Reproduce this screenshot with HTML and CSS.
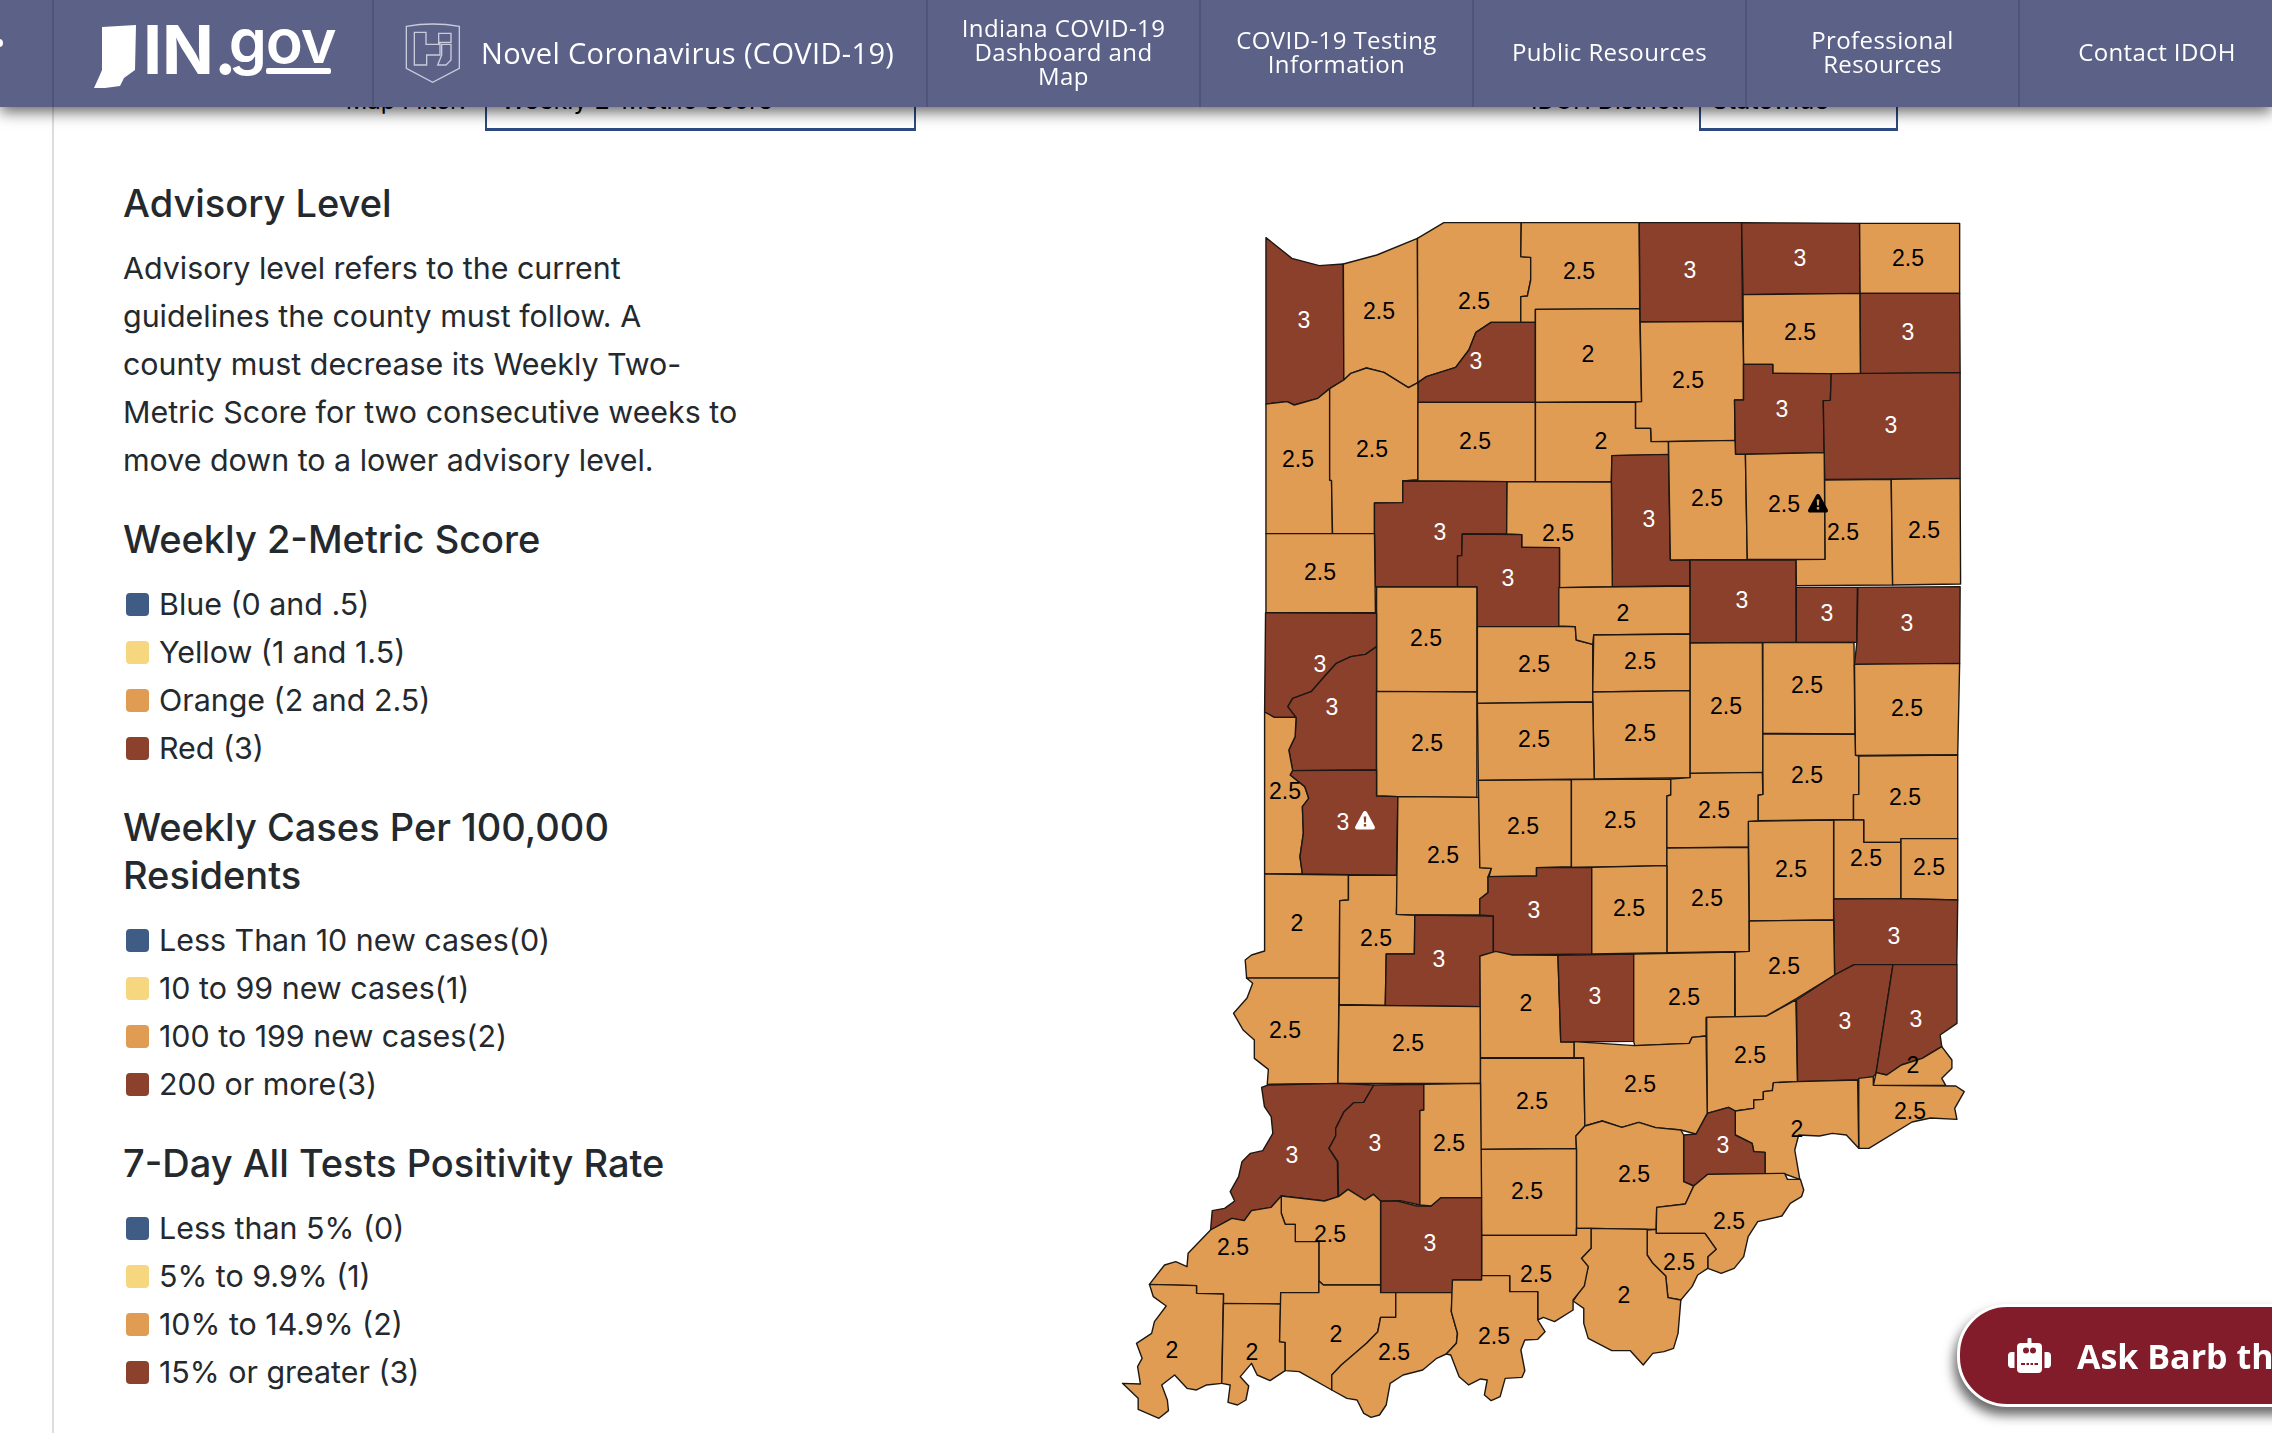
FILE: index.html
```html
<!DOCTYPE html>
<html lang="en">
<head>
<meta charset="utf-8">
<title>Indiana COVID-19 Advisory Map</title>
<link rel="stylesheet" href="styles.css">
</head>
<body>
<header class="nav">
  <div class="cell cell-menu"><span class="menu-dot"></span></div>
  <a class="cell cell-logo">
    <svg class="logo" viewBox="0 0 260 80" width="260" height="80">
      <polygon points="17,12 51,10 50,55 39,63 35,71 20,73 9,73 14,62 17,55 17,33"/>
      <text class="logo-in" x="58" y="59">IN.<tspan class="logo-gov" dx="-8" dy="-11">gov</tspan></text>
      <rect x="181" y="53" width="65" height="6" rx="2"/>
    </svg>
  </a>
  <a class="cell cell-title">
    <svg class="shield" viewBox="0 0 240 240" width="80" height="80">
      <path d="M31 34 Q110 20 190 34 V160 L110 202 L31 160 Z"/>
      <path d="M55 52 H90 V88 H128 V55 H165 V82 H132 V120 H92 V150 H55 Z"/>
      <path d="M137 88 H165 V135 L150 150 H125 L137 120 Z"/>
    </svg>
    <span class="title-text">Novel Coronavirus (COVID-19)</span>
  </a>
  <a class="cell cell-link">Indiana COVID-19 Dashboard and Map</a>
  <a class="cell cell-link">COVID-19 Testing Information</a>
  <a class="cell cell-link">Public Resources</a>
  <a class="cell cell-link">Professional Resources</a>
  <a class="cell cell-link">Contact IDOH</a>
</header>

<main class="page">
  <div class="filters">
    <span class="filter-label label-map">Map Filter:</span>
    <div class="select select-map">Weekly 2-Metric Score</div>
    <span class="filter-label label-district">IDOH District:</span>
    <div class="select select-district">Statewide</div>
  </div>

  <div class="content">
    <aside class="legend">
      <section class="block">
        <h2>Advisory Level</h2>
        <p>Advisory level refers to the current guidelines the county must follow. A county must decrease its Weekly Two-Metric Score for two consecutive weeks to move down to a lower advisory level.</p>
      </section>
      <section class="block">
        <h2>Weekly 2-Metric Score</h2>
        <ul>
          <li><i class="sw blue"></i>Blue (0 and .5)</li>
          <li><i class="sw yellow"></i>Yellow (1 and 1.5)</li>
          <li><i class="sw orange"></i>Orange (2 and 2.5)</li>
          <li><i class="sw red"></i>Red (3)</li>
        </ul>
      </section>
      <section class="block">
        <h2>Weekly Cases Per 100,000 Residents</h2>
        <ul>
          <li><i class="sw blue"></i>Less Than 10 new cases(0)</li>
          <li><i class="sw yellow"></i>10 to 99 new cases(1)</li>
          <li><i class="sw orange"></i>100 to 199 new cases(2)</li>
          <li><i class="sw red"></i>200 or more(3)</li>
        </ul>
      </section>
      <section class="block">
        <h2>7-Day All Tests Positivity Rate</h2>
        <ul>
          <li><i class="sw blue"></i>Less than 5% (0)</li>
          <li><i class="sw yellow"></i>5% to 9.9% (1)</li>
          <li><i class="sw orange"></i>10% to 14.9% (2)</li>
          <li><i class="sw red"></i>15% or greater (3)</li>
        </ul>
      </section>
    </aside>

    <svg class="map" viewBox="1100 179 880 1254" width="880" height="1254">
      <defs>
        <path id="warn" fill-rule="evenodd" d="M10 0 C11 0 11.6 .6 12 1.3 L19.7 15.6 C20.4 17 19.6 18.5 18 18.5 H2 C.4 18.5 -.4 17 .3 15.6 L8 1.3 C8.4 .6 9 0 10 0 Z M8.7 5.5 L9.1 11.5 H10.9 L11.3 5.5 Z M8.8 13 V15.5 H11.2 V13 Z"/>
      </defs>
      <g transform="translate(1240 210) scale(.4719 .33333)">
        <polygon class="r" points="55,83 110,145 168,167 219,162 220,510 190,536 165,565 115,585 100,575 55,582"/>
        <polygon class="o" points="219,162 290,135 376,85 377,518 357,533 305,487 268,474 235,490 220,510"/>
        <polygon class="o" points="376,85 432,38 596,38 595,140 616,142 616,210 609,258 595,260 595,337 532,337 500,367 485,420 457,472 395,500 377,518"/>
        <polygon class="o" points="596,38 846,38 847,296 626,298 626,337 595,337 595,260 609,258 616,210 616,142 595,140"/>
        <polygon class="r" points="532,337 626,337 626,577 376,577 377,518 395,500 457,472 485,420 500,367"/>
        <polygon class="o" points="626,298 847,296 851,575 626,577"/>
        <polygon class="r" points="846,38 1063,38 1065,334 848,336"/>
        <polygon class="r" points="1063,38 1313,40 1314,250 1066,254"/>
        <polygon class="o" points="1313,40 1525,40 1525,250 1314,250"/>
        <polygon class="o" points="1066,254 1314,250 1315,492 1129,490 1129,463 1067,463"/>
        <polygon class="r" points="1314,250 1525,250 1526,488 1315,492"/>
        <polygon class="o" points="848,336 1065,334 1067,463 1067,570 1048,570 1049,691 871,695 870,655 838,655 838,576 851,575"/>
        <polygon class="r" points="1067,463 1129,463 1129,490 1253,491 1251,571 1236,572 1238,728 1050,733 1048,570 1067,570"/>
        <polygon class="r" points="1253,491 1526,488 1526,805 1239,808 1236,572 1251,571"/>
        <polygon class="o" points="55,582 100,575 115,585 165,565 190,536 190,810 194,812 196,971 55,971"/>
        <polygon class="o" points="190,536 220,510 235,490 268,474 305,487 357,533 377,518 377,810 345,813 345,878 285,879 285,971 196,971 194,812 190,810"/>
        <polygon class="o" points="377,577 626,577 626,816 566,815 345,813 377,810"/>
        <polygon class="o" points="626,577 838,576 838,655 870,655 871,695 908,695 908,733 788,737 787,816 626,816"/>
        <polygon class="r" points="788,737 908,733 912,1050 953,1050 953,1127 789,1130 787,816"/>
        <polygon class="o" points="908,695 1049,691 1050,733 1071,733 1075,1048 912,1050"/>
        <polygon class="o" points="1071,733 1238,728 1240,1048 1075,1048"/>
        <polygon class="o" points="1239,810 1380,808 1383,1125 1179,1127 1178,1049 1240,1048"/>
        <polygon class="o" points="1380,808 1526,805 1527,1122 1383,1125"/>
        <polygon class="r" points="345,813 566,815 565,972 471,972 470,1037 461,1038 461,1131 287,1131 285,971 285,879 345,878"/>
        <polygon class="o" points="566,815 787,816 789,1130 677,1133 677,1013 597,1012 597,974 565,972"/>
        <polygon class="r" points="471,972 597,974 597,1012 677,1013 677,1133 677,1250 503,1250 502,1131 461,1131 461,1038 470,1037"/>
        <polygon class="o" points="55,971 285,971 287,1208 55,1208"/>
      </g>
      <g transform="translate(1220 600) scale(.4847 .33333)">
        <polygon class="o" points="323,-39 530,-39 530,276 323,274"/>
        <polygon class="r" points="94,38 323,40 323,140 300,163 270,170 240,190 215,230 188,275 150,295 140,320 157,352 112,352 92,336"/>
        <polygon class="r" points="323,140 323,510 150,512 142,450 155,410 157,352 140,320 150,295 188,275 215,230 240,190 270,170 300,163"/>
        <polygon class="o" points="323,274 530,276 530,592 367,590 323,588"/>
        <polygon class="o" points="92,336 112,352 157,352 155,410 142,450 150,512 145,525 175,560 183,595 170,620 172,700 165,770 170,822 92,822"/>
        <polygon class="r" points="150,512 323,510 323,588 367,590 364,826 170,822 165,770 172,700 170,620 183,595 175,560 145,525"/>
        <polygon class="o" points="92,822 265,825 265,900 247,902 246,1135 55,1135 52,1080 65,1065 92,1053"/>
        <polygon class="o" points="265,825 367,826 364,943 402,945 401,1062 343,1062 341,1216 246,1213 247,902 265,900"/>
        <polygon class="o" points="367,590 536,592 536,803 560,805 553,830 553,878 536,897 536,945 402,945 364,943"/>
        <polygon class="r" points="402,945 564,948 564,1057 537,1068 537,1220 341,1216 343,1062 401,1062"/>
        <polygon class="o" points="531,80 733,80 735,120 769,133 769,306 531,310"/>
        <polygon class="o" points="699,-37 970,-42 970,102 771,105 769,133 735,120 733,80 699,78"/>
        <polygon class="o" points="771,105 970,102 970,272 769,276"/>
        <polygon class="o" points="769,276 970,272 970,533 772,537"/>
        <polygon class="o" points="531,310 769,306 772,537 533,541"/>
        <polygon class="r" points="970,-120 1188,-120 1189,127 970,129"/>
        <polygon class="r" points="1189,-38 1315,-38 1314,127 1189,127"/>
        <polygon class="r" points="1316,-38 1527,-40 1526,190 1309,193 1314,127"/>
        <polygon class="o" points="970,129 1119,128 1120,400 1120,517 970,520"/>
        <polygon class="o" points="1120,128 1308,127 1310,402 1120,400"/>
        <polygon class="o" points="1309,193 1526,190 1522,464 1311,466"/>
        <polygon class="o" points="1120,402 1310,403 1311,466 1318,468 1318,583 1307,584 1307,658 1110,662 1110,585 1120,583"/>
        <polygon class="o" points="1318,468 1522,465 1522,716 1405,716 1405,727 1328,727 1328,660 1307,659 1307,584 1318,583"/>
        <polygon class="o" points="1266,660 1328,660 1328,727 1405,727 1405,896 1266,897"/>
        <polygon class="o" points="1405,716 1522,716 1522,900 1405,896"/>
        <polygon class="o" points="1090,664 1266,660 1266,960 1092,963"/>
        <polygon class="r" points="1266,897 1405,896 1522,900 1520,1094 1308,1094 1268,1125"/>
        <polygon class="o" points="533,541 725,539 725,800 653,803 653,828 555,830 560,805 536,803"/>
        <polygon class="o" points="725,539 930,537 930,585 922,588 922,797 725,802"/>
        <polygon class="o" points="922,588 930,585 930,537 970,533 970,520 1119,517 1120,583 1110,585 1110,662 1090,664 1090,741 922,744"/>
        <polygon class="o" points="922,744 1090,742 1092,1054 922,1058"/>
        <polygon class="r" points="653,803 767,802 767,1062 595,1065 564,1057 564,948 536,945 536,897 553,878 553,830 653,828"/>
        <polygon class="o" points="767,802 922,797 922,1058 767,1062"/>
        <polygon class="o" points="1092,963 1266,960 1268,1125 1190,1195 1125,1250 1063,1250 1062,1056 1092,1054"/>
      </g>
      <g transform="translate(1100 1000) scale(.5612 .33333)">
        <polygon class="o" points="261,-66 426,-66 424,250 298,253 300,208 275,175 275,120 255,90 238,40 262,-6 272,-50"/>
        <polygon class="o" points="426,15 678,20 678,250 424,250"/>
        <polygon class="o" points="677,-132 705,-146 735,-135 816,-134 821,125 845,126 845,173 678,173"/>
        <polygon class="r" points="816,-134 951,-138 951,124 821,126"/>
        <polygon class="o" points="951,-138 1131,-144 1131,50 1080,52 1080,108 1055,112 1050,130 953,137 951,124"/>
        <polygon class="o" points="1081,52 1188,48 1240,0 1243,245 1200,248 1198,272 1182,275 1182,298 1165,300 1165,325 1132,333 1120,322 1082,340"/>
        <polygon class="r" points="1309,-75 1344,-106 1413,-106 1383,220 1378,230 1350,240 1243,245 1241,0"/>
        <polygon class="r" points="1413,-106 1527,-106 1527,70 1497,105 1500,140 1465,175 1428,195 1402,225 1383,218"/>
        <polygon class="o" points="1383,218 1402,225 1428,195 1465,175 1500,140 1518,180 1518,205 1500,235 1507,256 1378,256"/>
        <polygon class="o" points="1378,256 1525,258 1540,275 1523,325 1527,358 1480,354 1447,366 1370,445 1352,445 1352,235 1378,230"/>
        <polygon class="o" points="1243,245 1350,240 1352,445 1330,405 1305,400 1282,408 1245,405 1238,450 1247,538 1220,522 1185,520 1185,457 1165,455 1162,430 1132,405 1132,333 1165,325 1165,300 1182,298 1182,275 1198,272 1200,248"/>
        <polygon class="r" points="1132,333 1120,322 1082,340 1062,402 1040,405 1040,545 1058,558 1083,523 1185,520 1185,457 1165,455 1162,430 1132,405"/>
        <polygon class="o" points="678,175 862,175 864,378 848,408 849,446 678,448"/>
        <polygon class="o" points="845,125 953,137 1050,130 1055,112 1080,108 1082,340 1062,402 1035,390 990,383 960,367 930,382 895,363 864,378 862,173 845,173"/>
        <polygon class="o" points="864,378 895,363 930,382 960,367 990,383 1035,390 1040,405 1040,545 1058,558 1043,612 992,622 991,688 875,685 849,685 849,446 848,408"/>
        <polygon class="o" points="678,448 849,446 849,706 680,706"/>
        <polygon class="o" points="1058,558 1083,523 1220,520 1225,538 1248,538 1254,570 1250,590 1230,610 1215,648 1172,665 1155,710 1147,770 1130,805 1107,820 1083,805 1083,770 1098,748 1078,700 991,700 992,622 1043,612"/>
        <polygon class="o" points="975,690 991,688 991,700 1078,700 1098,748 1083,770 1083,805 1065,825 1055,860 1035,900 1012,893 1008,828 985,790 975,765"/>
        <polygon class="o" points="875,685 975,688 975,765 985,790 1008,828 1012,893 1035,900 1030,1000 1022,1045 1005,1055 985,1060 968,1095 945,1052 912,1052 870,1015 862,970 862,925 843,903 860,860 870,800 858,775 875,745"/>
        <polygon class="o" points="680,706 849,706 849,685 875,685 875,745 858,775 870,800 863,858 843,900 843,930 810,965 790,952 780,960 780,875 730,875 730,827 680,827"/>
        <polygon class="r" points="500,603 530,603 565,618 590,618 607,593 680,593 680,840 630,840 628,878 500,878"/>
        <polygon class="r" points="288,262 300,255 424,250 488,255 470,307 452,308 435,335 420,385 420,408 408,445 423,485 424,590 400,603 323,588 305,622 270,632 257,662 235,655 197,690 200,632 222,625 240,603 232,575 247,530 253,485 268,460 290,452 308,400 305,350 293,320"/>
        <polygon class="r" points="488,255 577,253 577,330 570,332 570,615 535,602 500,603 487,583 472,600 442,568 425,590 424,485 408,445 420,408 420,385 435,335 452,308 470,307"/>
        <polygon class="o" points="577,253 678,250 680,593 607,593 590,618 570,615 570,332 577,330"/>
        <polygon class="o" points="323,588 400,603 425,590 442,568 472,600 487,583 500,603 500,855 398,855 390,843 390,725 348,725 348,673 330,673 323,640"/>
        <polygon class="o" points="197,690 235,655 257,662 270,632 305,622 323,588 323,640 330,673 348,673 348,725 390,725 390,878 322,878 322,912 220,910 220,882 172,880 172,857 88,853 115,795 135,785 155,800 157,760"/>
        <polygon class="o" points="88,853 172,857 172,880 220,882 217,1150 190,1155 172,1170 155,1165 133,1125 110,1155 120,1200 122,1232 105,1255 68,1228 68,1195 40,1150 72,1152 67,1100 75,1075 65,1030 92,1000 97,965 118,918 95,890"/>
        <polygon class="o" points="220,910 322,912 320,1025 330,1027 330,1112 303,1142 280,1125 270,1090 250,1130 265,1158 260,1200 245,1215 228,1207 232,1155 217,1150"/>
        <polygon class="o" points="322,878 390,878 390,843 398,855 500,855 500,878 527,878 527,952 500,952 495,995 475,1030 430,1095 413,1125 413,1170 355,1115 330,1112 330,1027 320,1025"/>
        <polygon class="o" points="527,878 628,878 626,935 637,1000 635,1030 617,1062 600,1075 575,1110 540,1125 517,1150 510,1215 498,1245 483,1252 470,1240 458,1200 440,1195 413,1170 413,1125 430,1095 475,1030 495,995 500,952 527,952"/>
        <polygon class="o" points="628,840 680,840 680,827 730,827 730,875 780,875 780,960 793,995 780,1018 757,1020 750,1050 757,1112 752,1132 722,1135 713,1190 697,1202 685,1185 690,1140 678,1137 657,1155 640,1130 625,1065 617,1062 635,1030 637,1000 626,935"/>
      </g>
      <g class="labels">
        <text class="w" x="1304" y="320">3</text><text x="1379" y="311">2.5</text><text x="1474" y="301">2.5</text><text x="1579" y="271">2.5</text><text class="w" x="1690" y="270">3</text><text class="w" x="1800" y="258">3</text><text x="1908" y="258">2.5</text>
        <text class="w" x="1476" y="361">3</text><text x="1588" y="354">2</text><text x="1800" y="332">2.5</text><text class="w" x="1908" y="332">3</text><text x="1688" y="380">2.5</text><text class="w" x="1782" y="409">3</text><text class="w" x="1891" y="425">3</text>
        <text x="1298" y="459">2.5</text><text x="1372" y="449">2.5</text><text x="1475" y="441">2.5</text><text x="1601" y="441">2</text><text x="1707" y="498">2.5</text><text x="1784" y="504">2.5</text><text x="1843" y="532">2.5</text><text x="1924" y="530">2.5</text>
        <text class="w" x="1440" y="532">3</text><text x="1558" y="533">2.5</text><text class="w" x="1649" y="519">3</text><text class="w" x="1508" y="578">3</text><text x="1320" y="572">2.5</text><text class="w" x="1742" y="600">3</text><text class="w" x="1827" y="613">3</text><text class="w" x="1907" y="623">3</text><text x="1623" y="613">2</text>
        <text x="1426" y="638">2.5</text><text x="1534" y="664">2.5</text><text x="1640" y="661">2.5</text><text class="w" x="1320" y="664">3</text><text x="1807" y="685">2.5</text><text x="1726" y="706">2.5</text><text x="1907" y="708">2.5</text><text class="w" x="1332" y="707">3</text>
        <text x="1534" y="739">2.5</text><text x="1640" y="733">2.5</text><text x="1427" y="743">2.5</text><text x="1807" y="775">2.5</text><text x="1905" y="797">2.5</text><text x="1714" y="810">2.5</text><text x="1285" y="791">2.5</text><text class="w" x="1343" y="822">3</text>
        <text x="1523" y="826">2.5</text><text x="1620" y="820">2.5</text><text x="1791" y="869">2.5</text><text x="1866" y="858">2.5</text><text x="1929" y="867">2.5</text><text x="1443" y="855">2.5</text><text class="w" x="1534" y="910">3</text><text x="1629" y="908">2.5</text><text x="1707" y="898">2.5</text>
        <text class="w" x="1894" y="936">3</text><text x="1297" y="923">2</text><text x="1376" y="938">2.5</text><text class="w" x="1439" y="959">3</text><text x="1784" y="966">2.5</text><text x="1526" y="1003">2</text><text class="w" x="1595" y="996">3</text><text x="1684" y="997">2.5</text>
        <text class="w" x="1845" y="1021">3</text><text class="w" x="1916" y="1019">3</text><text x="1285" y="1030">2.5</text><text x="1408" y="1043">2.5</text><text x="1750" y="1055">2.5</text><text x="1913" y="1065">2</text><text x="1640" y="1084">2.5</text><text x="1532" y="1101">2.5</text><text x="1910" y="1111">2.5</text><text x="1797" y="1129">2</text>
        <text class="w" x="1375" y="1143">3</text><text x="1449" y="1143">2.5</text><text class="w" x="1292" y="1155">3</text><text class="w" x="1723" y="1145">3</text><text x="1634" y="1174">2.5</text><text x="1527" y="1191">2.5</text><text x="1729" y="1221">2.5</text>
        <text x="1330" y="1234">2.5</text><text class="w" x="1430" y="1243">3</text><text x="1233" y="1247">2.5</text><text x="1679" y="1262">2.5</text><text x="1536" y="1274">2.5</text><text x="1624" y="1295">2</text><text x="1494" y="1336">2.5</text><text x="1336" y="1334">2</text><text x="1394" y="1352">2.5</text><text x="1172" y="1350">2</text><text x="1252" y="1352">2</text>
      </g>
      <use href="#warn" x="1808" y="494" class="warn-dark"/>
      <use href="#warn" x="1355" y="811" class="warn-light"/>
    </svg>
  </div>
</main>

<button class="chat">
  <svg class="robot" viewBox="0 0 45 35" width="45" height="35">
    <path fill-rule="evenodd" d="M20.5 1.5 a2 2 0 0 1 4 0 V5 H31 a4 4 0 0 1 4 4 V31 a4 4 0 0 1 -4 4 H14 a4 4 0 0 1 -4 -4 V9 a4 4 0 0 1 4 -4 H20.5 Z M16 12.5 a3 3 0 1 0 6 0 a3 3 0 1 0 -6 0 Z M23 12.5 a3 3 0 1 0 6 0 a3 3 0 1 0 -6 0 Z M14 25 V27 H18 V25 Z M19.5 25 V27 H22 V25 Z M23.500 25 V27 H26 V25 Z M27.500 25 V27 H31 V25 Z"/>
    <path d="M7.500 14 V30 H5 A3.500 3.500 0 0 1 1 26.500 V17.500 A3.500 3.500 0 0 1 5 14 Z M37.500 14 H40 A3.500 3.500 0 0 1 44 17.500 V26.500 A3.500 3.500 0 0 1 40 30 H37.500 Z"/>
  </svg>
  <span>Ask Barb the Chatbot</span>
</button>
</body>
</html>
```

FILE: styles.css
```css
* { box-sizing: border-box; }
html, body { margin: 0; height: 100%; }
body {
  overflow: hidden;
  background: #fff;
  color: #24292e;
  font-family: Inter, "Liberation Sans", sans-serif;
}

/* top bar: floats over the scrolled page */
.nav {
  position: fixed;
  top: 0; left: 0; right: 0;
  height: 107px;
  display: flex;
  background: #5c6187;
  box-shadow: 0 5px 14px rgba(0,0,0,.6);
  z-index: 5;
  font-family: "Open Sans", sans-serif;
  color: #fff;
}
.cell {
  display: flex;
  align-items: center;
  border-right: 2px solid #4f547b;
  flex: none;
}
.cell-menu { width: 54px; position: relative; overflow: hidden; }
.menu-dot { width: 8px; height: 8px; margin-left: -5px; margin-top: -22px; border-radius: 50%; background: #fff; }
.cell-logo { width: 320px; padding-left: 31px; align-items: flex-start; padding-top: 15px; }
.logo { fill: #fff; overflow: visible; }
.logo-in { font: 700 68px Inter, sans-serif; }
.logo-gov { font: 600 61px Inter, sans-serif; letter-spacing: -1px; }
.cell-title { width: 554px; padding-left: 22px; gap: 5px; }
.shield { fill: none; stroke: #d5d7e4; stroke-width: 4; stroke-opacity: .9; margin-top: 2px; }
.title-text { font-size: 29px; letter-spacing: .35px; white-space: nowrap; margin-top: -3px; }
.cell-link {
  width: 273px;
  padding: 0 30px 3px;
  justify-content: center;
  text-align: center;
  font-size: 24px;
  line-height: 24px;
  letter-spacing: .4px;
}
.cell-link:last-child { border-right: 0; width: 274px; padding: 0 0 3px; white-space: nowrap; }

/* page */
.page {
  margin-left: 52px;
  height: 100%;
  border-left: 2px solid #ddd;
  padding-left: 69px;
}
.filters {
  display: flex;
  align-items: flex-end;
  height: 131px;
  font-size: 24px;
  line-height: 30px;
  color: #000;
}
.filter-label { padding-bottom: 15px; text-align: right; }
.label-map { width: 343px; margin-right: 19px; }
.label-district { width: 769px; margin-right: 14px; }
.select {
  height: 120px;
  border: 2px solid #2d4a80;
  border-bottom-width: 3px;
  padding-top: 72px;
  font-size: 25px;
  white-space: nowrap;
}
.select-map { width: 431px; padding-left: 14px; }
.select-district { width: 199px; padding-left: 11px; }

.content { display: flex; margin-top: 48px; }
.legend { width: 977px; flex: none; padding-right: 359px; }
.block { margin-bottom: 31px; }
h2 {
  margin: 0 0 17px;
  font-size: 38px;
  line-height: 48px;
  font-weight: 500;
}
p { margin: 0; font-size: 30.400px; line-height: 48px; }
ul { list-style: none; margin: 0; padding: 0; font-size: 30.400px; line-height: 48px; }
li { display: flex; align-items: center; }
.sw { width: 23px; height: 23px; border-radius: 4px; margin: 0 10px 0 3px; flex: none; }
.blue { background: #3f5c85; }
.yellow { background: #f6d77f; }
.orange { background: #e09c52; }
.red { background: #8c412c; }

.map { flex: none; overflow: visible; }
.map polygon { stroke: #1c1712; stroke-width: 1.4; stroke-linejoin: round; vector-effect: non-scaling-stroke; }
.o { fill: #e09c52; }
.r { fill: #8b402c; }
.labels text {
  font: 23px "Liberation Sans", Arial, sans-serif;
  text-anchor: middle;
  dominant-baseline: central;
  fill: #000;
}
.labels .w { fill: #fff; }
.warn-dark { fill: #000; }
.warn-light { fill: #fff; }

.chat {
  position: fixed;
  left: 1957px;
  top: 1304px;
  width: 500px;
  height: 103px;
  display: flex;
  align-items: center;
  gap: 25px;
  padding: 0 0 0 47px;
  background: #821c2b;
  border: 3px solid #fff;
  border-radius: 50px;
  box-shadow: -3px 8px 12px rgba(0,0,0,.6);
  color: #fff;
  font: 700 34px "Open Sans", sans-serif;
  white-space: nowrap;
}
.robot { fill: #fff; flex: none; }
```
